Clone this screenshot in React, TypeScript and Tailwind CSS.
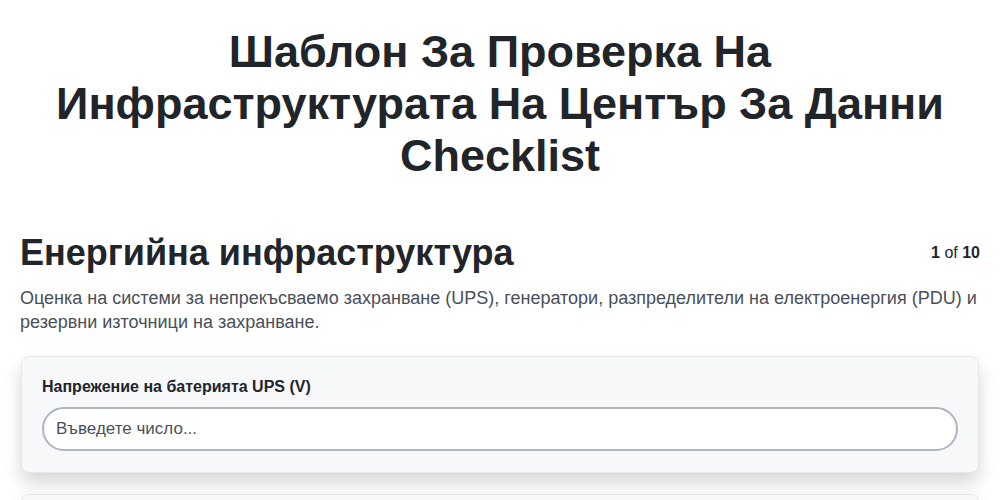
export default function App() {
  return (
    <div className="min-h-screen bg-white font-['Liberation_Sans',Arial,sans-serif] text-[#212529]">
      <div className="mx-auto max-w-[1000px] px-5">
        <h1 className="px-6 pt-[26px] text-center text-[45px] font-bold leading-[52px] text-[#212529]">
          Шаблон За Проверка На Инфраструктурата На Център За Данни Checklist
        </h1>

        <div className="mt-[49px] flex items-center justify-between">
          <h2 className="text-[36px] font-bold leading-[44px] text-[#212529]">
            Енергийна инфраструктура
          </h2>
          <span className="text-[16px] text-[#212529]">
            <b>1</b> of <b>10</b>
          </span>
        </div>
        <p className="mt-[11px] text-[18px] leading-[24px] text-[#495057]">
          Оценка на системи за непрекъсваемо захранване (UPS), генератори,
          разпределители на електроенергия (PDU) и резервни източници на
          захранване.
        </p>

        <div className="mt-[22px] flex flex-col gap-[21px] px-px">
          <div className="rounded-lg border border-[#e5e7eb] bg-[#f7f8fa] px-[20px] pb-[21px] pt-[20px] shadow-[0_10px_18px_rgba(0,0,0,0.16)]">
            <label className="block text-[16px] font-bold leading-[20px] text-[#212529]">
              Напрежение на батерията UPS (V)
            </label>
            <input
              type="text"
              placeholder="Въведете число..."
              className="mt-[10px] block h-[44px] w-full rounded-full border-2 border-[#adb5bd] bg-white px-[12px] text-[17px] text-[#212529] outline-none placeholder:text-[#495057]"
            />
          </div>
          <div className="h-[120px] rounded-lg border border-[#e5e7eb] bg-[#f7f8fa] shadow-[0_10px_18px_rgba(0,0,0,0.16)]" />
        </div>
      </div>
    </div>
  );
}
